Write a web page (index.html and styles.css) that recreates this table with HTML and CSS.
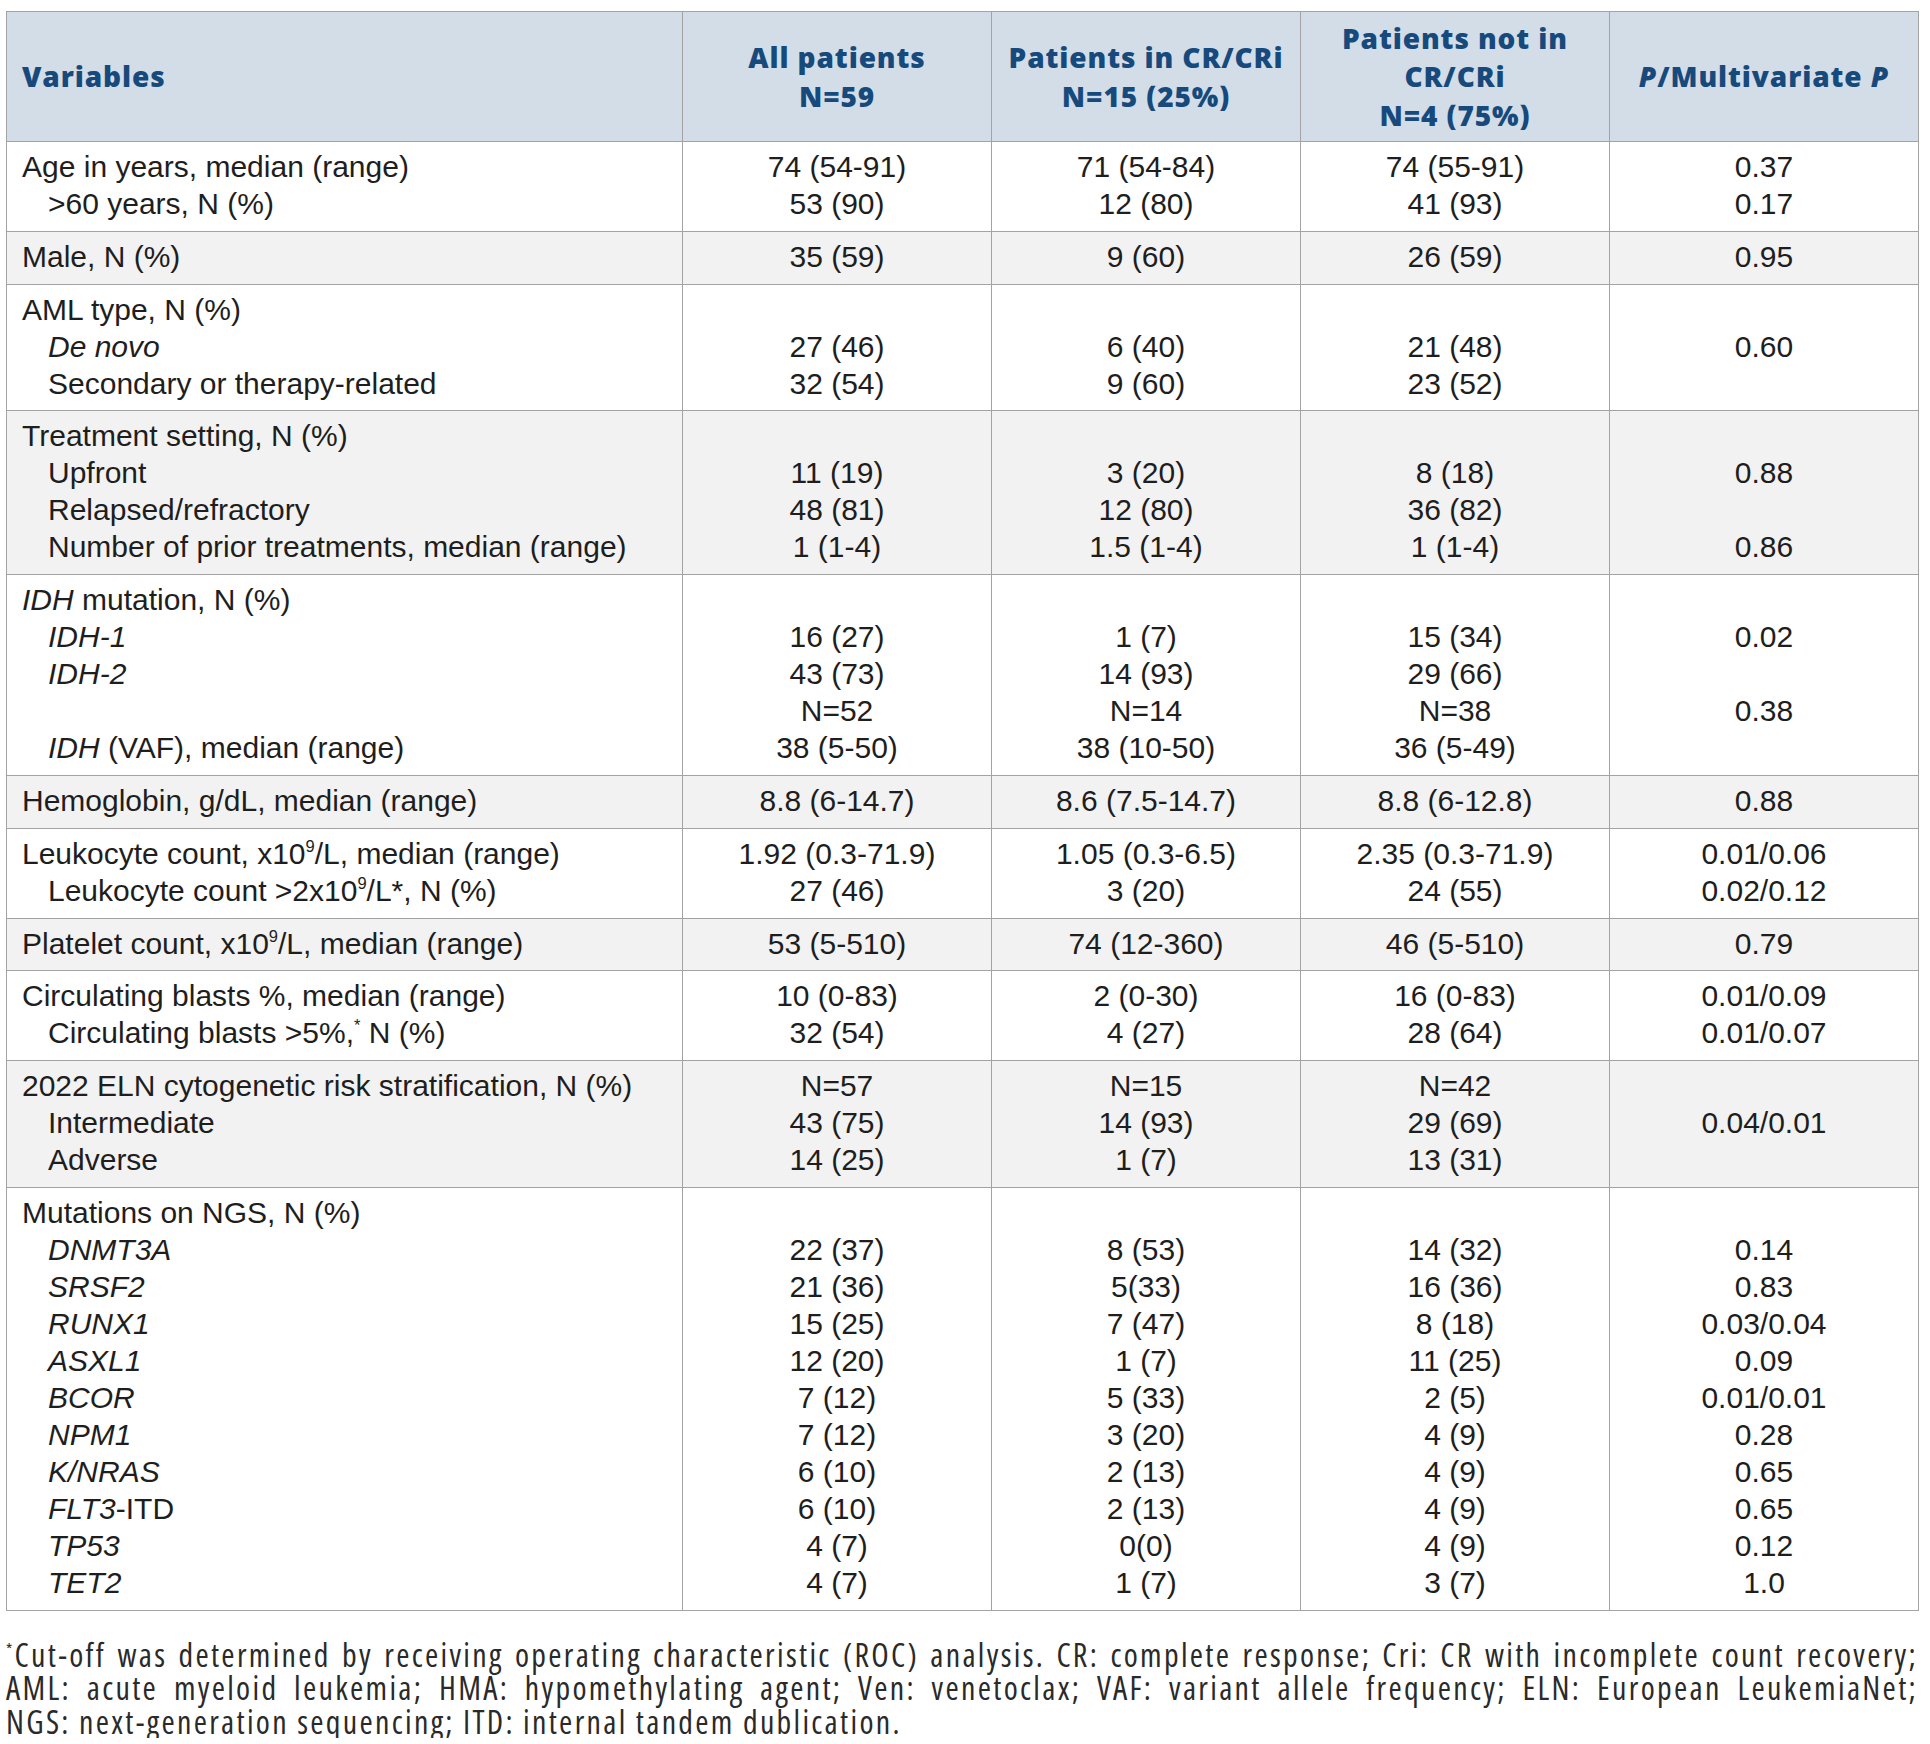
FILE: index.html
```html
<!DOCTYPE html>
<html lang="en">
<head>
<meta charset="utf-8">
<title>Patient characteristics</title>
<link rel="stylesheet" href="styles.css">
</head>
<body>
<table class="data">
  <colgroup>
    <col class="c-var">
    <col class="c-num">
    <col class="c-num">
    <col class="c-num">
    <col class="c-num">
  </colgroup>
  <thead>
    <tr>
      <th class="left">Variables</th>
      <th>All patients<br>N=59</th>
      <th>Patients in CR/CRi<br>N=15 (25%)</th>
      <th>Patients not in<br>CR/CRi<br>N=4 (75%)</th>
      <th><i>P</i>/Multivariate <i>P</i></th>
    </tr>
  </thead>
  <tbody>
    <tr>
      <td class="var">Age in years, median (range)<br><span class="ind">&gt;60 years, N (%)</span></td>
      <td>74 (54-91)<br>53 (90)</td>
      <td>71 (54-84)<br>12 (80)</td>
      <td>74 (55-91)<br>41 (93)</td>
      <td>0.37<br>0.17</td>
    </tr>
    <tr class="alt">
      <td class="var">Male, N (%)</td>
      <td>35 (59)</td>
      <td>9 (60)</td>
      <td>26 (59)</td>
      <td>0.95</td>
    </tr>
    <tr>
      <td class="var">AML type, N (%)<br><span class="ind"><i>De novo</i></span><br><span class="ind">Secondary or therapy-related</span></td>
      <td>&nbsp;<br>27 (46)<br>32 (54)</td>
      <td>&nbsp;<br>6 (40)<br>9 (60)</td>
      <td>&nbsp;<br>21 (48)<br>23 (52)</td>
      <td>&nbsp;<br>0.60<br>&nbsp;</td>
    </tr>
    <tr class="alt">
      <td class="var">Treatment setting, N (%)<br><span class="ind">Upfront</span><br><span class="ind">Relapsed/refractory</span><br><span class="ind">Number of prior treatments, median (range)</span></td>
      <td>&nbsp;<br>11 (19)<br>48 (81)<br>1 (1-4)</td>
      <td>&nbsp;<br>3 (20)<br>12 (80)<br>1.5 (1-4)</td>
      <td>&nbsp;<br>8 (18)<br>36 (82)<br>1 (1-4)</td>
      <td>&nbsp;<br>0.88<br>&nbsp;<br>0.86</td>
    </tr>
    <tr>
      <td class="var"><i>IDH</i> mutation, N (%)<br><span class="ind"><i>IDH-1</i></span><br><span class="ind"><i>IDH-2</i></span><br>&nbsp;<br><span class="ind"><i>IDH</i> (VAF), median (range)</span></td>
      <td>&nbsp;<br>16 (27)<br>43 (73)<br>N=52<br>38 (5-50)</td>
      <td>&nbsp;<br>1 (7)<br>14 (93)<br>N=14<br>38 (10-50)</td>
      <td>&nbsp;<br>15 (34)<br>29 (66)<br>N=38<br>36 (5-49)</td>
      <td>&nbsp;<br>0.02<br>&nbsp;<br>0.38<br>&nbsp;</td>
    </tr>
    <tr class="alt">
      <td class="var">Hemoglobin, g/dL, median (range)</td>
      <td>8.8 (6-14.7)</td>
      <td>8.6 (7.5-14.7)</td>
      <td>8.8 (6-12.8)</td>
      <td>0.88</td>
    </tr>
    <tr>
      <td class="var">Leukocyte count, x10<sup>9</sup>/L, median (range)<br><span class="ind">Leukocyte count &gt;2x10<sup>9</sup>/L*, N (%)</span></td>
      <td>1.92 (0.3-71.9)<br>27 (46)</td>
      <td>1.05 (0.3-6.5)<br>3 (20)</td>
      <td>2.35 (0.3-71.9)<br>24 (55)</td>
      <td>0.01/0.06<br>0.02/0.12</td>
    </tr>
    <tr class="alt">
      <td class="var">Platelet count, x10<sup>9</sup>/L, median (range)</td>
      <td>53 (5-510)</td>
      <td>74 (12-360)</td>
      <td>46 (5-510)</td>
      <td>0.79</td>
    </tr>
    <tr>
      <td class="var">Circulating blasts %, median (range)<br><span class="ind">Circulating blasts &gt;5%,<sup>*</sup> N (%)</span></td>
      <td>10 (0-83)<br>32 (54)</td>
      <td>2 (0-30)<br>4 (27)</td>
      <td>16 (0-83)<br>28 (64)</td>
      <td>0.01/0.09<br>0.01/0.07</td>
    </tr>
    <tr class="alt">
      <td class="var">2022 ELN cytogenetic risk stratification, N (%)<br><span class="ind">Intermediate</span><br><span class="ind">Adverse</span></td>
      <td>N=57<br>43 (75)<br>14 (25)</td>
      <td>N=15<br>14 (93)<br>1 (7)</td>
      <td>N=42<br>29 (69)<br>13 (31)</td>
      <td>&nbsp;<br>0.04/0.01<br>&nbsp;</td>
    </tr>
    <tr>
      <td class="var">Mutations on NGS, N (%)<br><span class="ind"><i>DNMT3A</i></span><br><span class="ind"><i>SRSF2</i></span><br><span class="ind"><i>RUNX1</i></span><br><span class="ind"><i>ASXL1</i></span><br><span class="ind"><i>BCOR</i></span><br><span class="ind"><i>NPM1</i></span><br><span class="ind"><i>K/NRAS</i></span><br><span class="ind"><i>FLT3</i>-ITD</span><br><span class="ind"><i>TP53</i></span><br><span class="ind"><i>TET2</i></span></td>
      <td>&nbsp;<br>22 (37)<br>21 (36)<br>15 (25)<br>12 (20)<br>7 (12)<br>7 (12)<br>6 (10)<br>6 (10)<br>4 (7)<br>4 (7)</td>
      <td>&nbsp;<br>8 (53)<br>5(33)<br>7 (47)<br>1 (7)<br>5 (33)<br>3 (20)<br>2 (13)<br>2 (13)<br>0(0)<br>1 (7)</td>
      <td>&nbsp;<br>14 (32)<br>16 (36)<br>8 (18)<br>11 (25)<br>2 (5)<br>4 (9)<br>4 (9)<br>4 (9)<br>4 (9)<br>3 (7)</td>
      <td>&nbsp;<br>0.14<br>0.83<br>0.03/0.04<br>0.09<br>0.01/0.01<br>0.28<br>0.65<br>0.65<br>0.12<br>1.0</td>
    </tr>
  </tbody>
</table>
<div class="notes">
  <p class="just"><sup>*</sup>Cut-off was determined by receiving operating characteristic (ROC) analysis. CR: complete response; Cri: CR with incomplete count recovery;</p>
  <p class="just">AML: acute myeloid leukemia; HMA: hypomethylating agent; Ven: venetoclax; VAF: variant allele frequency; ELN: European LeukemiaNet;</p>
  <p>NGS: next-generation sequencing; ITD: internal tandem dublication.</p>
</div>
</body>
</html>
```
FILE: styles.css
```css
html, body {
  margin: 0;
  padding: 0;
  background: #ffffff;
}
body {
  padding: 11px 12px 0 6px;
  font-family: "Liberation Sans", Arial, sans-serif;
  color: #1e1e1e;
}
.data {
  width: 1912px;
  border-collapse: collapse;
  table-layout: fixed;
  border: 1px solid #a3a3a3;
}
.c-var { width: 676px; }
.c-num { width: 309px; }
.data th {
  background: #d3dde7;
  color: #174a7c;
  font-family: "Open Sans", "Noto Sans", sans-serif;
  font-weight: 800;
  font-size: 28px;
  letter-spacing: 0.9px;
  line-height: 38.5px;
  height: 130px;
  padding: 0 15px;
  text-align: center;
  vertical-align: middle;
  border: 1px solid #a3a3a3;
  box-sizing: border-box;
}
.data th.left { text-align: left; }
.data td {
  font-size: 30px;
  line-height: 37px;
  padding: 6px 15px 8.8px;
  text-align: center;
  vertical-align: top;
  border: 1px solid #a3a3a3;
  white-space: nowrap;
}
.data td.var { text-align: left; }
.data tr.alt td { background: #f2f2f2; }
.ind { padding-left: 26px; }
sup {
  font-size: 0.55em;
  line-height: 0;
  vertical-align: 0.75em;
}
.notes {
  width: 1912px;
  margin-top: 27px;
  font-family: "Open Sans", "Noto Sans", sans-serif;
  font-stretch: 87.5%;
  font-weight: 400;
  font-size: 32px;
  letter-spacing: 2.3px;
  line-height: 33.5px;
  color: #2a2a2a;
}
.notes p { margin: 0; }
.notes p.just {
  text-align: justify;
  text-align-last: justify;
}
.notes sup { font-size: 0.5em; }
```
